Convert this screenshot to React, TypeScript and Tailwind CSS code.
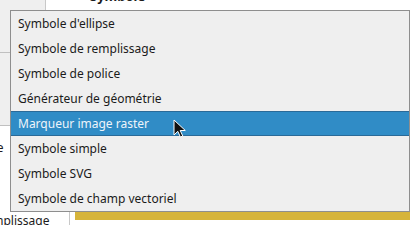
import React from "react";

const items = [
  "Symbole d'ellipse",
  "Symbole de remplissage",
  "Symbole de police",
  "Générateur de géométrie",
  "Marqueur image raster",
  "Symbole simple",
  "Symbole SVG",
  "Symbole de champ vectoriel",
];

export default function App() {
  return (
    <div
      className="relative w-[415px] h-[225px] overflow-hidden bg-white text-[#1b1b1b]"
      style={{ fontFamily: '"Noto Sans", "Open Sans", sans-serif' }}
    >
      {/* background window */}
      <div className="flex flex-col w-full h-full">
        <div className="flex h-[10px] shrink-0">
          <div className="w-[46px] bg-[#efefef] border-r border-[#c8c8c8]" />
          <div className="flex-1 relative overflow-hidden">
            <span className="block ml-[44px] -mt-[12px] text-[13px] font-bold leading-[16px]">Symbole</span>
          </div>
        </div>
        <div className="flex flex-1">
          <div className="w-[10px] flex flex-col bg-[#efefef]">
            <div className="h-[42px]" />
            <div className="h-px bg-[#c0c0c0]" />
            <div className="h-[72px]" />
            <div className="h-px bg-[#c0c0c0]" />
            <div className="flex-1 bg-white overflow-hidden">
              <span className="block -ml-[45px] mt-[14px] text-[12px] leading-[16px]">Symbole</span>
            </div>
          </div>
          <div className="flex-1" />
        </div>
        <div className="flex h-[14px] shrink-0">
          <div className="w-[70px] overflow-hidden border-r border-[#c8c8c8]">
            <span className="block -ml-[22px] mt-[2px] text-[12px] leading-[16px] whitespace-nowrap">Remplissage</span>
          </div>
          <div className="w-[5px]" />
          <div className="w-[335px] h-[9px] bg-[#d6b43a]" />
        </div>
      </div>

      {/* popup menu */}
      <div className="absolute left-[10px] top-[10px] w-[400px] h-[202px] bg-[#efefef] border border-[#8e8e8e] flex flex-col">
        {items.map((t, i) =>
          i === 4 ? (
            <div
              key={t}
              className="h-[25px] shrink-0 flex items-center pl-[7px] bg-[#308cc6] border-y border-[#2a6a98] text-[#eef4fa] text-[12px]"
            >
              {t}
            </div>
          ) : (
            <div key={t} className="h-[25px] shrink-0 flex items-center pl-[7px] text-[12px]">
              {t}
            </div>
          )
        )}
      </div>

      {/* mouse cursor */}
      <svg className="absolute left-[173px] top-[119px]" width="14" height="20" viewBox="0 0 14 20">
        <path
          d="M1 1 L1 16 L4.8 12.3 L7.4 18 L9.8 17 L7.2 11.5 L12.3 11.5 Z"
          fill="#111"
          stroke="#fff"
          strokeWidth="1"
          strokeLinejoin="round"
        />
      </svg>
    </div>
  );
}
